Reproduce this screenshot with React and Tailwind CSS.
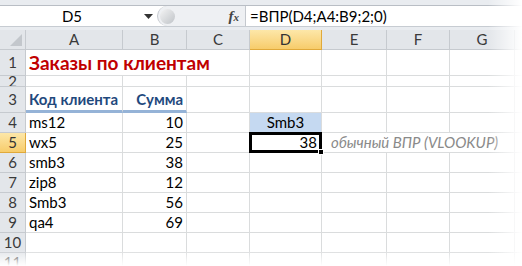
import React from "react";

const cols = ["A", "B", "C", "D", "E", "F", "G"];
const rows = [1, 2, 3, 4, 5, 6, 7, 8, 9, 10, 11];

const data = {
  4: ["ms12", 10],
  5: ["wx5", 25],
  6: ["smb3", 38],
  7: ["zip8", 12],
  8: ["Smb3", 56],
  9: ["qa4", 69],
};

const cell = "border-r border-b border-[#dadcdd] bg-white";

function RowHead({ n, active }) {
  return (
    <div
      className={
        "flex items-center justify-center overflow-hidden border-r border-b text-[15px] leading-none " +
        (active
          ? "bg-gradient-to-b from-[#fde7a8] to-[#f7cc6a] border-[#e0a93a] text-[#333]"
          : "bg-[#e3e6ea] border-[#c6cacf] text-[#3a3a3a]")
      }
    >
      {n}
    </div>
  );
}

function Row({ n }) {
  const d = data[n];
  if (n === 1) {
    return (
      <>
        <div className={cell + " col-span-3 flex items-end pb-[3px] pl-[3px]"}>
          <span className="text-[19px] font-bold leading-none text-[#c00000]">Заказы по клиентам</span>
        </div>
        <div className={cell} />
        <div className={cell} />
        <div className={cell} />
        <div className={cell} />
      </>
    );
  }
  if (n === 3) {
    return (
      <>
        <div className="flex items-end border-r border-b-[3px] border-r-[#dadcdd] border-b-[#95b3d7] bg-white pb-[3px] pl-[3px] text-[15px] font-bold leading-none text-[#1f497d]">
          Код клиента
        </div>
        <div className="flex items-end justify-end border-r border-b-[3px] border-r-[#dadcdd] border-b-[#95b3d7] bg-white pb-[3px] pr-[3px] text-[15px] font-bold leading-none text-[#1f497d]">
          Сумма
        </div>
        <div className={cell} />
        <div className={cell} />
        <div className={cell} />
        <div className={cell} />
        <div className={cell} />
      </>
    );
  }
  return (
    <>
      <div className={cell + " flex items-center pl-[3px] text-[15px] leading-none text-black"}>
        {d ? d[0] : ""}
      </div>
      <div className={cell + " flex items-center justify-end pr-[3px] text-[15px] leading-none text-black"}>
        {d ? d[1] : ""}
      </div>
      <div className={cell} />
      {n === 4 ? (
        <div className="flex items-center justify-center border-r border-b border-[#dadcdd] bg-[#c5d9f1] text-[15px] leading-none text-black">
          Smb3
        </div>
      ) : n === 5 ? (
        <div className="relative flex items-center justify-end border-r border-b border-[#dadcdd] bg-white pr-[4px] text-[15px] leading-none text-black">
          38
          <div className="absolute -left-[1px] -top-[1px] -right-[1px] -bottom-[1px] border-[3px] border-black" />
          <div className="absolute -bottom-[3px] -right-[3px] h-[6px] w-[6px] border border-white bg-black" />
        </div>
      ) : (
        <div className={cell} />
      )}
      {n === 5 ? (
        <div className={cell + " col-span-3 flex items-center pl-[9px] text-[15px] italic leading-none text-[#8a8a8a]"}>
          обычный ВПР (VLOOKUP)
        </div>
      ) : (
        <>
          <div className={cell} />
          <div className={cell} />
          <div className={cell} />
        </>
      )}
    </>
  );
}

export default function App() {
  return (
    <div className="relative h-[266px] w-[522px] overflow-hidden bg-white font-['Lato',sans-serif]">
      <div className="h-[6px] border-b border-[#b9bec5] bg-[#e9ecf0]" />
      <div className="flex h-[21px] border-b border-[#c7ccd2] bg-white">
        <div className="flex w-[157px] items-center">
          <span className="flex-1 text-center text-[15px] leading-none text-black">D5</span>
          <svg width="9" height="5" viewBox="0 0 9 5" className="mr-[4px]">
            <path d="M0 0h9L4.5 5z" fill="#333" />
          </svg>
        </div>
        <div className="flex w-[88px] items-center rounded-l-full border-l border-[#c4c8ce] bg-[#eef0f3]">
          <div className="ml-[2px] h-[15px] w-[15px] rounded-full bg-gradient-to-br from-[#f4f4f4] to-[#bfc3c8]" />
          <span className="ml-auto mr-[6px] font-['Liberation_Serif',serif] text-[15px] font-bold italic leading-none text-[#444]">
            f<span className="text-[11px]">x</span>
          </span>
        </div>
        <div className="flex flex-1 items-center border-l border-[#c4c8ce] pl-[4px] text-[15px] leading-none text-black">
          =ВПР(D4;A4:B9;2;0)
        </div>
      </div>
      <div className="h-[3px] bg-[#e9ecf0]" />
      <div className="grid grid-cols-[26px_97px_64px_63px_72px_65px_63px_65px_1fr] grid-rows-[20px_26px_11px_26px_20px_20px_20px_20px_20px_20px_20px_20px]">
        <div className="relative border-r border-b border-[#c6cacf] bg-[#e3e6ea]">
          <svg width="12" height="12" viewBox="0 0 12 12" className="absolute bottom-[3px] right-[3px]">
            <path d="M12 0V12H0z" fill="#c3c7cc" />
          </svg>
        </div>
        {cols.map((c) => (
          <div
            key={c}
            className={
              "flex items-center justify-center border-r border-b text-[15px] leading-none " +
              (c === "D"
                ? "bg-gradient-to-b from-[#fde7a8] to-[#f7cc6a] border-[#e0a93a] text-[#333]"
                : "bg-[#e3e6ea] border-[#c6cacf] text-[#3a3a3a]")
            }
          >
            {c}
          </div>
        ))}
        <div className="border-b border-[#c6cacf] bg-[#e3e6ea]" />
        {rows.map((n) => (
          <React.Fragment key={n}>
            <RowHead n={n} active={n === 5} />
            <Row n={n} />
            <div className="border-b border-[#dadcdd] bg-white" />
          </React.Fragment>
        ))}
      </div>
      <div className="pointer-events-none absolute right-0 top-0 h-full w-[34px] bg-gradient-to-r from-transparent to-white" />
      <div className="pointer-events-none absolute bottom-0 left-0 h-[16px] w-full bg-gradient-to-b from-transparent to-white" />
    </div>
  );
}
